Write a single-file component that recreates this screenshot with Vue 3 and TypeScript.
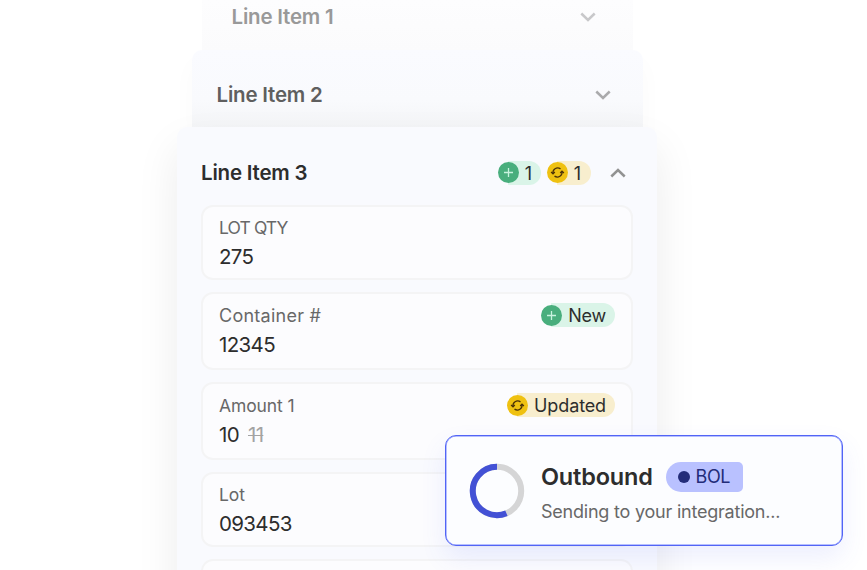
<template>
  <div class="scene">
    <div class="stack">
      <section
        v-for="item in lineItems"
        :key="item.title"
        class="card"
        :class="`card-${item.depth}`"
      >
        <header class="card-header">
          <h3 class="card-title">{{ item.title }}</h3>
          <div v-if="item.open" class="counts">
            <span v-for="count in counts" :key="count.kind" class="badge" :class="count.kind">
              <span class="badge-icon">
                <svg viewBox="0 0 21 21" width="21" height="21">
                  <path v-for="d in icons[count.kind]" :key="d" :d="d" />
                </svg>
              </span>
              <span class="badge-count">{{ count.value }}</span>
            </span>
          </div>
          <svg class="chevron" viewBox="0 0 16 10" width="16" height="10">
            <path :d="item.open ? 'M1.3 8.5 8 2.1l6.7 6.4' : 'M1.3 1.5 8 7.9l6.7-6.4'" />
          </svg>
        </header>

        <div v-if="item.open" class="fields">
          <div v-for="field in fields" :key="field.label" class="field" :class="{ tall: field.kind }">
            <div class="field-text">
              <div class="field-label" :class="field.name">{{ field.label }}</div>
              <div class="field-value">
                <span>{{ field.value }}</span>
                <del v-if="field.previous">{{ field.previous }}</del>
              </div>
            </div>
            <span v-if="field.kind" class="badge" :class="field.kind">
              <span class="badge-icon">
                <svg viewBox="0 0 21 21" width="21" height="21">
                  <path v-for="d in icons[field.kind]" :key="d" :d="d" />
                </svg>
              </span>
              <span class="badge-label">{{ field.status }}</span>
            </span>
          </div>
          <div class="field"></div>
        </div>
      </section>
    </div>

    <aside class="toast">
      <svg class="spinner" viewBox="0 0 56 56" width="56" height="56">
        <circle cx="28" cy="28" r="24.2" class="track" />
        <path d="M28 3.8A24.2 24.2 0 1 0 37.4 50.3" class="progress" />
      </svg>
      <div class="toast-body">
        <div class="toast-heading">
          <strong class="toast-title">Outbound</strong>
          <span class="tag"><i class="tag-dot"></i><span>BOL</span></span>
        </div>
        <div class="toast-message">Sending to your integration...</div>
      </div>
    </aside>
  </div>
</template>

<script setup lang="ts">
type Kind = 'added' | 'updated'

interface LineItem {
  title: string
  depth: 'back' | 'middle' | 'front'
  open?: boolean
}

interface Field {
  name: string
  label: string
  value: string
  previous?: string
  kind?: Kind
  status?: string
}

const lineItems: LineItem[] = [
  { title: 'Line Item 1', depth: 'back' },
  { title: 'Line Item 2', depth: 'middle' },
  { title: 'Line Item 3', depth: 'front', open: true },
]

const counts: { kind: Kind; value: number }[] = [
  { kind: 'added', value: 1 },
  { kind: 'updated', value: 1 },
]

const fields: Field[] = [
  { name: 'qty', label: 'LOT QTY', value: '275' },
  { name: 'container', label: 'Container #', value: '12345', kind: 'added', status: 'New' },
  { name: 'amount', label: 'Amount 1', value: '10', previous: '11', kind: 'updated', status: 'Updated' },
  { name: 'lot', label: 'Lot', value: '093453' },
]

const icons: Record<Kind, string[]> = {
  added: ['M10.5 6v9M6 10.5h9'],
  updated: [
    'M6 11.4C5.4 7.6 9.6 4.4 13.5 6.9',
    'M4.1 10.1l1.9 1.7 1.8-1.8',
    'M15 9.6c.6 3.8-3.6 7-7.5 4.5',
    'M13.2 11l1.8-1.8 1.9 1.7',
  ],
}
</script>

<style>
body {
  margin: 0;
  background: #fff;
}
</style>

<style scoped>
.scene {
  position: relative;
  box-sizing: border-box;
  width: 867px;
  height: 570px;
  padding-right: 33px;
  overflow: hidden;
  color: #2d2d2d;
  font-family: Inter, "Liberation Sans", sans-serif;
}

.stack {
  display: flex;
  flex-direction: column;
  align-items: center;
}

.card {
  position: relative;
  box-sizing: border-box;
  flex: none;
  border-radius: 10px;
  background: #f9fafe;
}

.card-back {
  width: 431px;
  height: 62px;
  padding: 0 37px 0 30px;
  margin-bottom: -12px;
  border-radius: 0;
  background: linear-gradient(#fdfdfe, #fbfbfc 50px);
}

.card-middle {
  width: 451px;
  height: 90px;
  padding: 28px 32px 0 25px;
  margin-bottom: -13px;
  background: linear-gradient(#fafbff, #f9fafd 50px, #f4f5f7 78px);
  box-shadow: 0 12px 26px rgba(0, 0, 0, 0.025);
}

.card-front {
  width: 480px;
  height: 560px;
  padding: 29px 24px 0;
  box-shadow: 0 20px 44px rgba(0, 0, 0, 0.08);
}

.card-header {
  display: flex;
  align-items: center;
  height: 34px;
}

.card-front .card-header {
  padding-right: 7px;
}

.card-title {
  margin: 0;
  font-size: 20.5px;
  font-weight: 600;
  line-height: 34px;
  letter-spacing: -0.2px;
  white-space: nowrap;
}

.card-back .card-title {
  color: #999;
  letter-spacing: -0.2px;
}

.card-middle .card-title {
  color: #5f5f5f;
}

.chevron {
  margin-left: auto;
  fill: none;
  stroke: #929292;
  stroke-width: 2.5;
}

.card-back .chevron {
  stroke: #c8c8ca;
}

.card-middle .chevron {
  stroke: #aaaaac;
}

.counts {
  display: flex;
  gap: 6px;
  margin-left: auto;
}

.counts + .chevron {
  margin-left: 19px;
}

.badge {
  display: flex;
  align-items: center;
  box-sizing: border-box;
  height: 24px;
  border-radius: 12px;
  font-size: 18px;
  line-height: 24px;
}

.badge.added {
  background: linear-gradient(90deg, transparent 10px, #daf4e8 10px);
}

.badge.updated {
  background: linear-gradient(90deg, transparent 10px, #f8eece 10px);
}

.badge-icon {
  width: 21px;
  height: 21px;
  border-radius: 50%;
}

.counts .badge-icon {
  margin-bottom: 1px;
}

.badge-icon svg {
  display: block;
  fill: none;
  stroke-width: 1.3;
}

.added .badge-icon {
  background: #49ae7d;
  stroke: #c8f2de;
}

.updated .badge-icon {
  background: #efc111;
  stroke: #4a3108;
}

.badge-count {
  width: 19px;
  padding: 2px 3px 0 0;
  text-align: center;
}

.counts .badge.updated .badge-count {
  padding-right: 4px;
}

.badge-label {
  padding: 2px 9px 0 6px;
  letter-spacing: -0.2px;
}

.updated .badge-label {
  letter-spacing: -0.12px;
}

.fields {
  display: flex;
  flex-direction: column;
  gap: 12px;
  margin-top: 15px;
}

.field {
  display: flex;
  justify-content: space-between;
  align-items: flex-start;
  box-sizing: border-box;
  height: 75px;
  padding: 7px 16px 0;
  border: 2px solid #f4f4f5;
  border-radius: 12px;
  background: #fcfcfe;
}

.field.tall {
  height: 78px;
  padding-top: 8px;
}

.tall .badge {
  margin-top: 1px;
}

.field-label {
  color: #686868;
  font-size: 17.5px;
  line-height: 28px;
  letter-spacing: -0.1px;
}

.field-label.qty {
  letter-spacing: -0.9px;
}

.field-label.container {
  font-size: 18px;
  letter-spacing: 0.25px;
}

.field-value {
  display: flex;
  gap: 9px;
  font-size: 20.5px;
  line-height: 30px;
  letter-spacing: -0.65px;
}

.field-value del {
  color: #a3a3a3;
  text-decoration-thickness: 1px;
}

.toast {
  position: absolute;
  top: 435px;
  left: 445px;
  display: flex;
  box-sizing: border-box;
  width: 398px;
  height: 111px;
  padding: 26px 22px 0 23px;
  border: 1px solid #5264f5;
  border-radius: 11px;
  background: #fcfdff;
  box-shadow: inset 0 0 0 0.5px #7181ff, 0 12px 26px rgba(82, 100, 245, 0.1);
}

.spinner {
  flex: none;
  margin-left: -0.5px;
  margin-top: 0.5px;
  fill: none;
  stroke-width: 6;
}

.track {
  stroke: #d5d5d6;
}

.progress {
  stroke: #4351d5;
}

.toast-body {
  margin-left: 16.5px;
}

.toast-heading {
  display: flex;
  align-items: center;
  gap: 13px;
  height: 30px;
}

.toast-title {
  font-size: 23.5px;
  font-weight: 600;
  line-height: 30px;
  letter-spacing: -0.2px;
}

.tag {
  display: flex;
  align-items: center;
  gap: 6px;
  box-sizing: border-box;
  width: 77px;
  height: 30px;
  padding-left: 12px;
  border-radius: 15px 5px 5px 15px;
  background: #b9c1ff;
  color: #232c79;
  font-size: 18px;
  line-height: 32px;
  letter-spacing: -0.5px;
}

.tag-dot {
  width: 12px;
  height: 12px;
  border-radius: 50%;
  background: #232c79;
}

.toast-message {
  margin-top: 7px;
  color: #686868;
  font-size: 18px;
  line-height: 26px;
  letter-spacing: -0.22px;
  white-space: nowrap;
}
</style>
